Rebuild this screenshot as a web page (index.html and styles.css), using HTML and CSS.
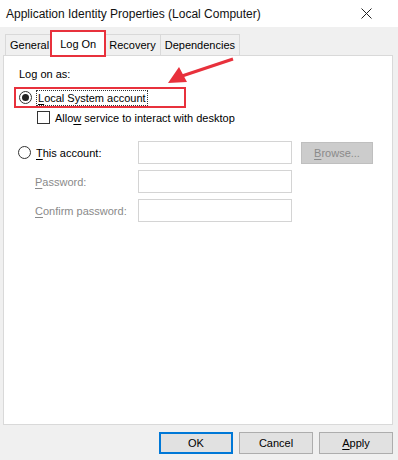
FILE: index.html
```html
<!DOCTYPE html>
<html lang="en">
<head>
    <meta charset="UTF-8">
    <meta name="viewport" content="width=device-width, initial-scale=1.0">
    <title>Application Identity Properties (Local Computer)</title>
    <link rel="stylesheet" href="styles.css">
</head>
<body>
    <div class="dialog">
        <div class="titlebar">
            <span class="title">Application Identity Properties (Local Computer)</span>
            <svg class="close" width="11" height="11" viewBox="0 0 11 11">
                <path d="M0.5 0.5 L10.5 10.5 M10.5 0.5 L0.5 10.5" stroke="#222" stroke-width="1"/>
            </svg>
        </div>

        <div class="client">
            <div class="tabs">
                <div class="tab">General</div>
                <div class="tab active">Log On</div>
                <div class="tab">Recovery</div>
                <div class="tab">Dependencies</div>
            </div>

            <div class="panel">
                <div class="caption">Log on as:</div>

                <div class="option highlight">
                    <span class="radio checked"></span>
                    <span class="focus"><u>L</u>ocal System account</span>
                </div>
                <div class="check-row">
                    <span class="checkbox"></span>
                    <span>Allo<u>w</u> service to interact with desktop</span>
                </div>

                <div class="account">
                    <div class="option">
                        <span class="radio"></span>
                        <span><u>T</u>his account:</span>
                    </div>
                    <div class="field"></div>
                    <div class="browse"><u>B</u>rowse...</div>

                    <div class="label"><u>P</u>assword:</div>
                    <div class="field"></div>
                    <div></div>

                    <div class="label"><u>C</u>onfirm password:</div>
                    <div class="field"></div>
                    <div></div>
                </div>
            </div>

            <div class="buttons">
                <div class="btn default">OK</div>
                <div class="btn">Cancel</div>
                <div class="btn"><u>A</u>pply</div>
            </div>
        </div>

        <!-- annotation arrow over the dialog -->
        <svg class="arrow" width="398" height="460" viewBox="0 0 398 460">
            <line x1="233" y1="59" x2="182" y2="76" stroke="#e8313c" stroke-width="3"/>
            <polygon points="168,83 179,67 187,82" fill="#e8313c"/>
        </svg>
    </div>
</body>
</html>
```

FILE: styles.css
```css
body {
    margin: 0;
    font-family: "Liberation Sans", Arial, sans-serif;
    font-size: 11px;
    color: #000;
}
u {
    text-decoration-thickness: 1px;
    text-underline-offset: 2px;
}
.dialog {
    position: relative;
    width: 398px;
    height: 460px;
    background: #f0f0f0;
    overflow: hidden;
}
.titlebar {
    height: 27px;
    background: #fff;
    display: flex;
    align-items: center;
    justify-content: space-between;
    padding: 0 26px 0 6px;
}
.title {
    font-size: 12px;
    color: #111;
}
.close {
    display: block;
}
.client {
    padding-top: 4px;
}
.tabs {
    display: flex;
    align-items: flex-end;
    height: 24px;
    padding-left: 5px;
    position: relative;
    z-index: 1;
}
.tab {
    height: 20px;
    line-height: 20px;
    padding: 0 4px;
    border: 1px solid #d9d9d9;
    border-bottom: none;
    background: #f0f0f0;
    margin-right: -1px;
}
.tab.active {
    height: 24px;
    line-height: 24px;
    background: #fff;
    padding: 0 8px;
    margin: 0 -1px -1px -2px;
    outline: 2px solid #e8313c;
    outline-offset: -1px;
    position: relative;
    z-index: 2;
}
.panel {
    height: 370px;
    margin: 0 5px 0 3px;
    border: 1px solid #d9d9d9;
    background: #fff;
    padding: 11px 0 0 14px;
    box-sizing: border-box;
}
.caption {
    height: 14px;
    line-height: 14px;
    margin-left: 1px;
}
.option {
    display: flex;
    align-items: center;
    gap: 5px;
}
.highlight {
    width: 165px;
    height: 17px;
    margin: 6px 0 0 -4px;
    padding-left: 3px;
    border: 2px solid #e8313c;
}
.radio {
    width: 11px;
    height: 11px;
    border: 1px solid #333;
    border-radius: 50%;
    background: #fff;
    position: relative;
}
.radio.checked::after {
    content: "";
    position: absolute;
    left: 2px;
    top: 2px;
    width: 7px;
    height: 7px;
    border-radius: 50%;
    background: #222;
}
.focus {
    outline: 1px dotted #333;
    padding: 0 1px;
    line-height: 14px;
}
.check-row {
    display: flex;
    align-items: center;
    gap: 5px;
    margin: 3px 0 0 19px;
}
.checkbox {
    width: 11px;
    height: 11px;
    border: 1px solid #333;
    background: #fff;
}
.account {
    display: grid;
    grid-template-columns: 111px 154px 72px;
    grid-auto-rows: 23px;
    row-gap: 6px;
    column-gap: 9px;
    align-items: center;
    margin-top: 17px;
}
.label {
    color: #8a8a8a;
    padding-left: 17px;
}
.field {
    height: 23px;
    box-sizing: border-box;
    border: 1px solid #d4d4d4;
    background: #fff;
}
.browse {
    height: 20px;
    line-height: 20px;
    text-align: center;
    background: #cccccc;
    border: 1px solid #bfbfbf;
    color: #8a8a8a;
    align-self: start;
    margin-top: 1px;
}
.buttons {
    display: flex;
    justify-content: flex-end;
    gap: 6px;
    padding: 7px 5px 0 0;
}
.btn {
    width: 72px;
    height: 20px;
    line-height: 20px;
    text-align: center;
    background: #e1e1e1;
    border: 1px solid #adadad;
}
.btn.default {
    border: 2px solid #0078d7;
    width: 70px;
    height: 18px;
    line-height: 18px;
}
.arrow {
    position: absolute;
    left: 0;
    top: 0;
    pointer-events: none;
}
```
